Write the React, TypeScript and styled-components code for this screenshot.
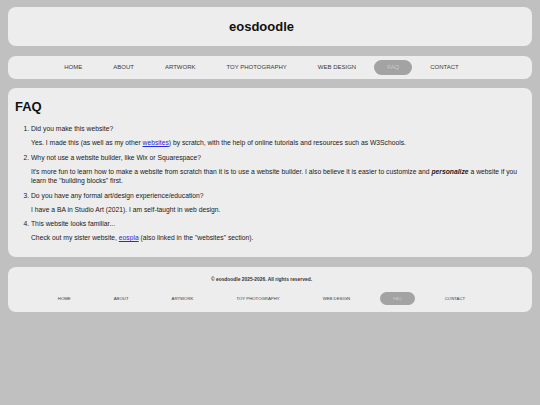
import React from 'react';
import styled, { createGlobalStyle } from 'styled-components';

const GlobalStyle = createGlobalStyle`
  html, body {
    margin: 0;
    padding: 0;
    background-color: #c0c0c0;
    font-family: 'Liberation Sans', Arial, sans-serif;
    color: #1a1a1a;
  }
`;

const Page = styled.div`
  display: flex;
  flex-direction: column;
  gap: 9.5px;
  padding: 7px 8px;
`;

const Panel = styled.div`
  background-color: #ededed;
  border-radius: 8px;
`;

const Header = styled(Panel)`
  height: 39px;
  box-sizing: border-box;
  padding-right: 17px;
  display: flex;
  align-items: center;
  justify-content: center;
`;

const Title = styled.h1`
  margin: 0;
  font-size: 13px;
  font-weight: bold;
  color: #111;
`;

const NavBar = styled(Panel)`
  padding: 4px 0;
`;

const NavList = styled.ul<{ $small?: boolean }>`
  list-style: none;
  margin: 0;
  padding: 0 17px 0 0;
  display: flex;
  justify-content: center;
  gap: ${(p) => (p.$small ? '16px' : '5px')};
`;

const NavItem = styled.li<{ $active?: boolean; $small?: boolean }>`
  height: ${(p) => (p.$small ? '13px' : '15px')};
  padding: 0 ${(p) => (p.$small ? '13.5px' : '13px')};
  display: flex;
  align-items: center;
  border-radius: 8px;
  font-size: ${(p) => (p.$small ? '4.3px' : '6px')};
  text-transform: uppercase;
  white-space: nowrap;
  background-color: ${(p) => (p.$active ? '#a3a3a3' : 'transparent')};
  color: ${(p) => (p.$active ? '#c9c9c9' : '#3a3a3a')};
`;

const Main = styled(Panel)`
  height: 169px;
  box-sizing: border-box;
  padding: 10px 10px 0 7px;
`;

const Heading = styled.h2`
  margin: 0;
  font-size: 13px;
  line-height: 17px;
  font-weight: bold;
  color: #111;
`;

const Questions = styled.ol`
  margin: 9px 0 0;
  padding-left: 16px;
  font-size: 6.75px;
  line-height: 9.5px;
  color: #1a1a1a;
`;

const Answer = styled.p`
  margin: 4.5px 0 5px;
`;

const Link = styled.a`
  color: #2b2bdc;
  text-decoration: underline;
`;

const Footer = styled(Panel)`
  height: 45px;
  box-sizing: border-box;
  padding-top: 9px;
  display: flex;
  flex-direction: column;
  gap: 9px;
`;

const Copyright = styled.div`
  padding-right: 17px;
  text-align: center;
  font-size: 4.9px;
  line-height: 7px;
  font-weight: bold;
  color: #333;
`;

const links = ['Home', 'About', 'Artwork', 'Toy Photography', 'Web Design', 'FAQ', 'Contact'];

function Nav({ small }: { small?: boolean }) {
  return (
    <NavList $small={small}>
      {links.map((l) => (
        <NavItem key={l} $small={small} $active={l === 'FAQ'}>
          {l}
        </NavItem>
      ))}
    </NavList>
  );
}

export default function App() {
  return (
    <>
      <GlobalStyle />
      <Page>
        <Header>
          <Title>eosdoodle</Title>
        </Header>
        <NavBar>
          <Nav />
        </NavBar>
        <Main>
          <Heading>FAQ</Heading>
          <Questions>
            <li>
              Did you make this website?
              <Answer>
                Yes. I made this (as well as my other <Link href="#">websites</Link>) by scratch, with the help of online
                tutorials and resources such as W3Schools.
              </Answer>
            </li>
            <li>
              Why not use a website builder, like Wix or Squarespace?
              <Answer>
                It's more fun to learn how to make a website from scratch than it is to use a website builder. I also
                believe it is easier to customize and <b><i>personalize</i></b> a website if you learn the "building
                blocks" first.
              </Answer>
            </li>
            <li>
              Do you have any formal art/design experience/education?
              <Answer>I have a BA in Studio Art (2021). I am self-taught in web design.</Answer>
            </li>
            <li>
              This website looks familiar...
              <Answer>
                Check out my sister website, <Link href="#">eospla</Link> (also linked in the "websites" section).
              </Answer>
            </li>
          </Questions>
        </Main>
        <Footer>
          <Copyright>© eosdoodle 2025-2026. All rights reserved.</Copyright>
          <Nav small />
        </Footer>
      </Page>
    </>
  );
}
